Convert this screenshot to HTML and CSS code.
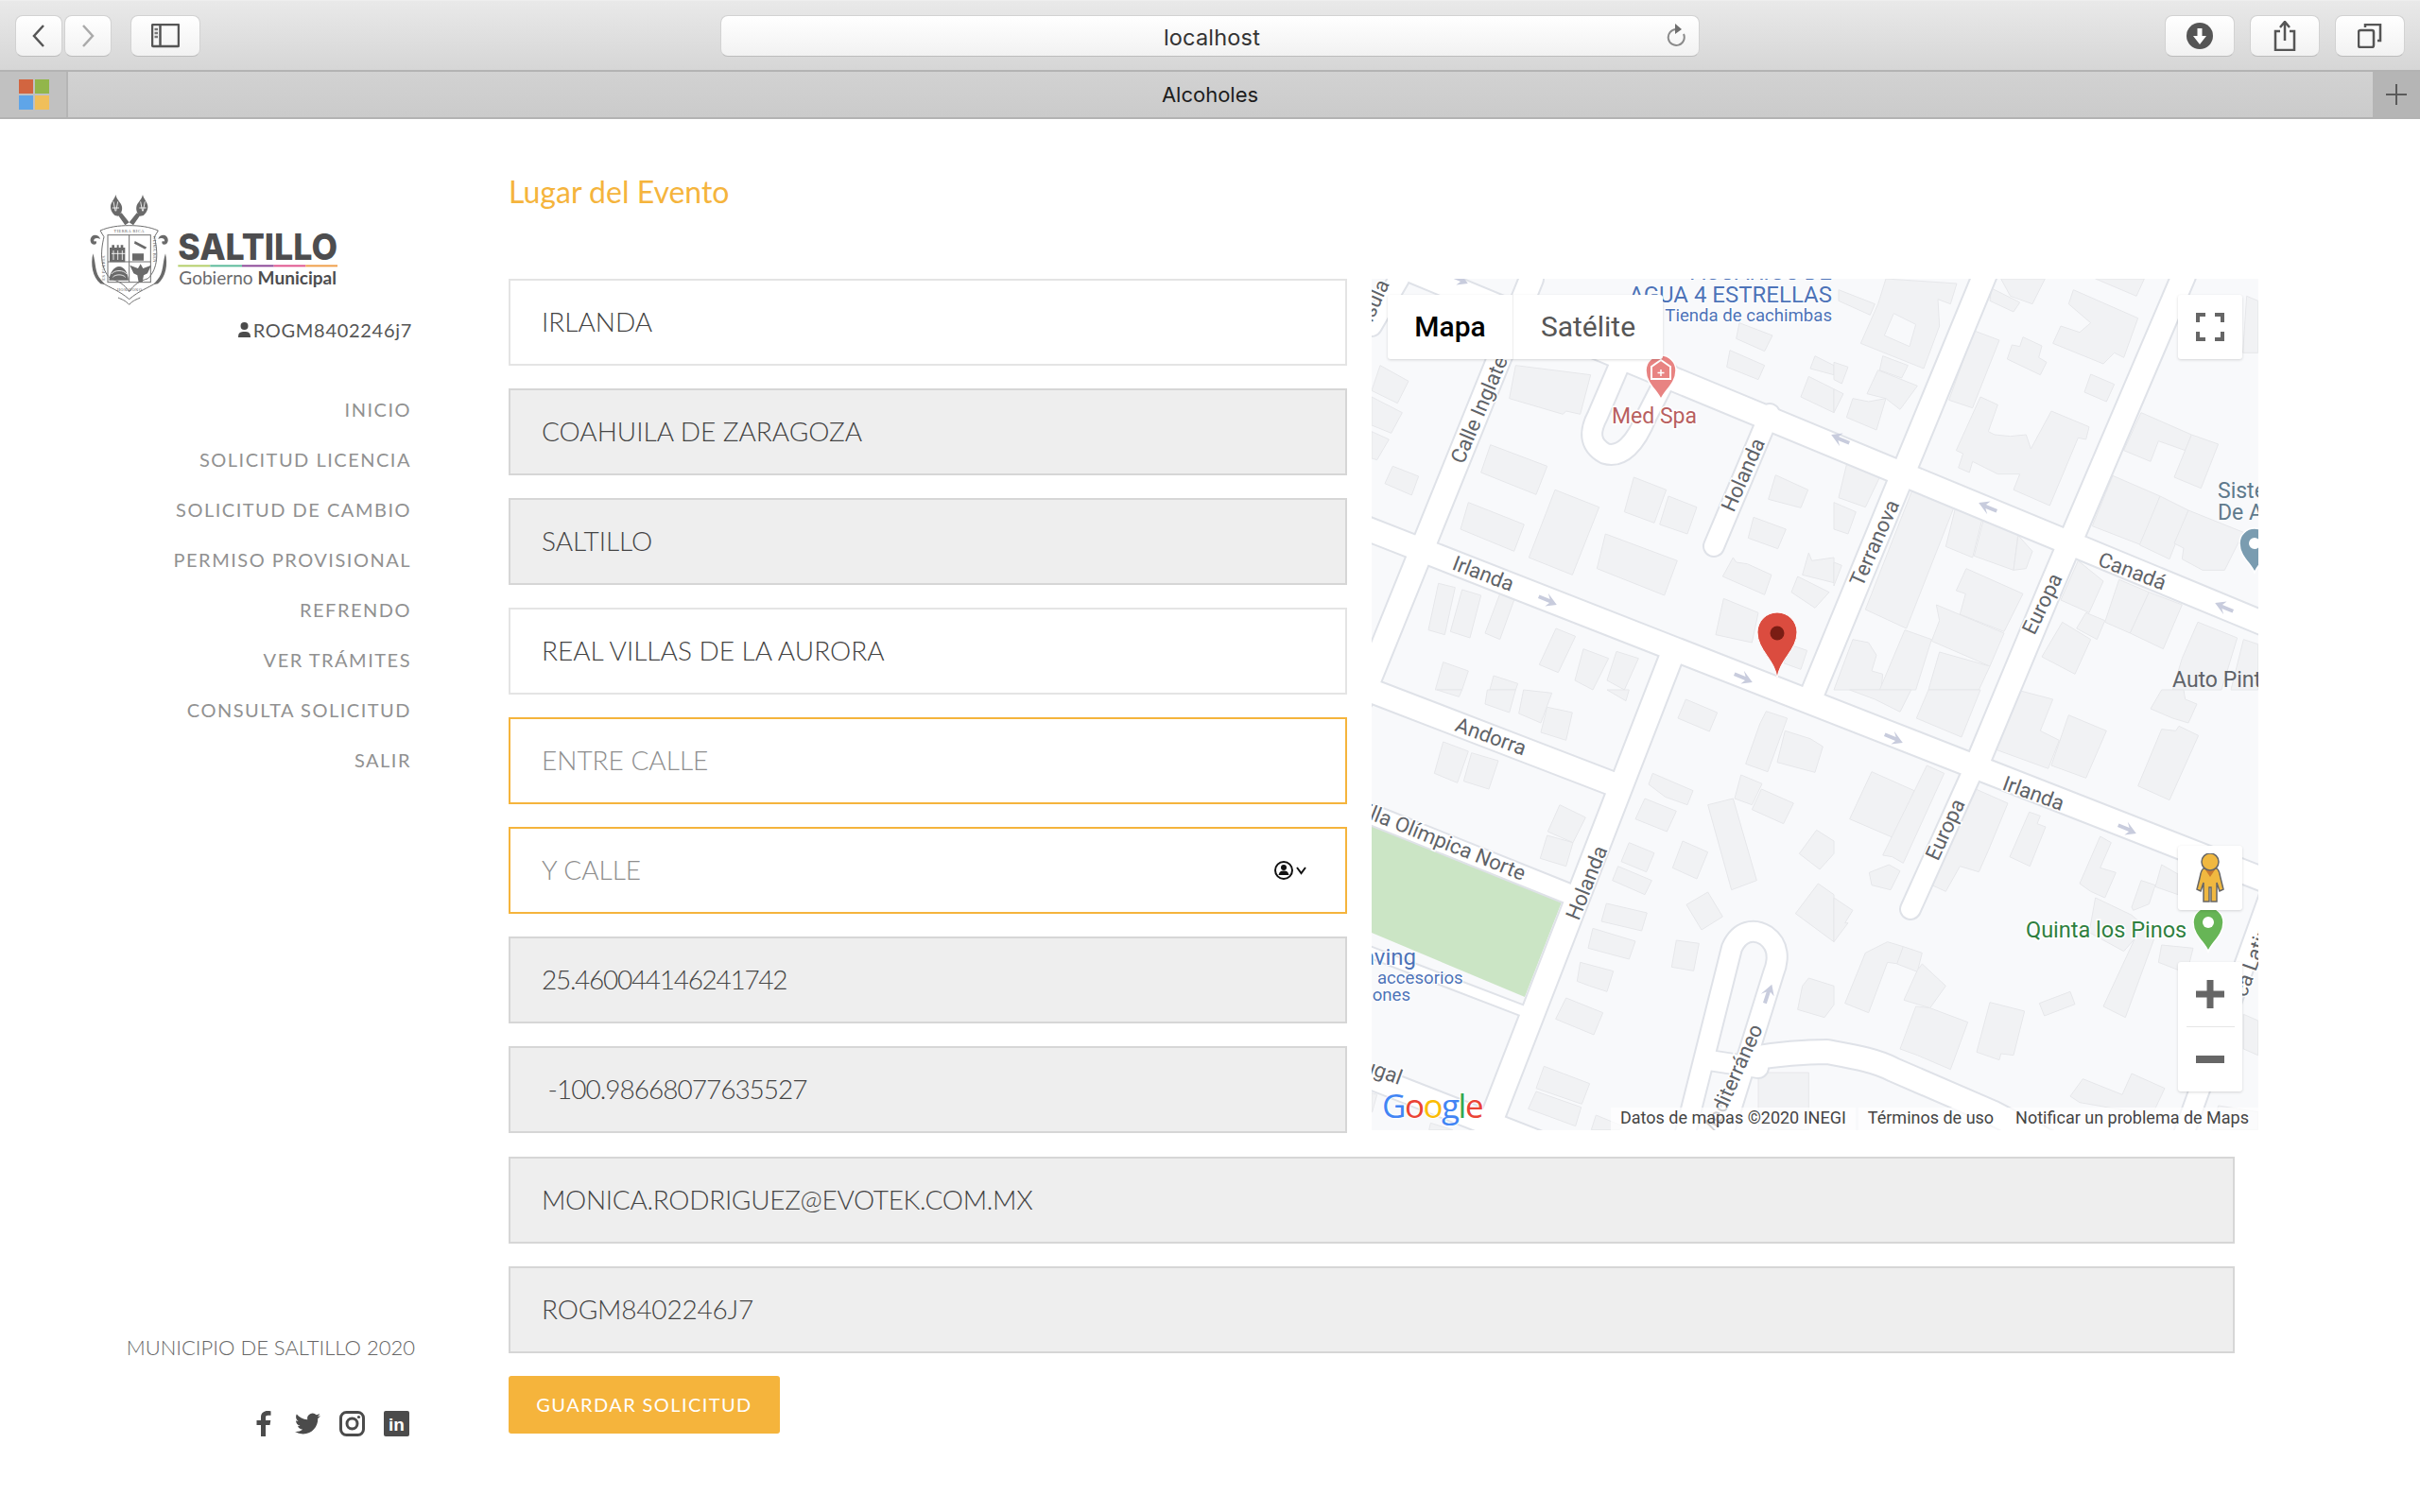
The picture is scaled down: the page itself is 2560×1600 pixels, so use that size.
FILE: index.html
```html
<!DOCTYPE html>
<html lang="es">
<head>
<meta charset="utf-8">
<title>Alcoholes</title>
<link rel="stylesheet" href="styles.css">
</head>
<body>
<header class="toolbar">
  <div class="tb-left">
    <button class="tb-btn nav-btn"><svg width="24" height="30" viewBox="0 0 24 30"><path d="M17 4 7 15l10 11" class="ic-dark"/></svg></button>
    <button class="tb-btn nav-btn"><svg width="24" height="30" viewBox="0 0 24 30"><path d="M7 4l10 11L7 26" class="ic-light"/></svg></button>
    <button class="tb-btn side-btn"><svg width="30" height="26" viewBox="0 0 30 26"><rect x="1" y="1" width="28" height="23" rx="1" class="ic-dark"/><path d="M9.500 1v23" class="ic-dark"/><path d="M3.500 6h3.500M3.500 10h3.500M3.500 14h3.500" class="ic-mid"/></svg></button>
  </div>
  <div class="addr"><span class="addr-text">localhost</span>
    <svg class="reload" width="24" height="26" viewBox="0 0 24 26"><path d="M11 6a8.500 8.500 0 1 0 8 5" class="ic-grey"/><path d="M10 0l7 6-7 5z" class="ic-fill-grey"/></svg>
  </div>
  <div class="tb-right">
    <button class="tb-btn act-btn"><svg width="28" height="28" viewBox="0 0 28 28"><circle cx="14" cy="14" r="14" class="ic-fill-dark"/><path d="M11.500 6h5v8h4.500L14 23 7 14h4.500z" class="ic-fill-white"/></svg></button>
    <button class="tb-btn act-btn"><svg width="24" height="32" viewBox="0 0 24 32"><path d="M7 11H2v20h20V11h-5" class="ic-dark"/><path d="M12 21V2M7 7l5-6 5 6" class="ic-dark"/></svg></button>
    <button class="tb-btn act-btn"><svg width="26" height="26" viewBox="0 0 26 26"><rect x="1" y="7" width="16" height="18" rx="2" class="ic-dark"/><path d="M8 4V1h16v17h-3" class="ic-dark"/></svg></button>
  </div>
</header>
<div class="tabbar">
  <div class="fav-cell"><div class="fav"><i class="f-r"></i><i class="f-g"></i><i class="f-b"></i><i class="f-y"></i></div></div>
  <div class="tab">Alcoholes</div>
  <div class="plus-cell"><svg width="22" height="22" viewBox="0 0 22 22"><path d="M11 0v22M0 11h22" class="ic-plus"/></svg></div>
</div>

<div class="page">
  <aside class="sidebar">
    <svg class="logo" width="300" height="140" viewBox="0 0 900 420">
      <g transform="translate(30 30)">
        <g class="crest-fill">
          <path d="M97 18c-3 14-14 22-16 36-1 14 7 24 14 30l10 2c9-7 14-18 12-30-2-12-16-20-20-38z"/>
          <path d="M183 18c-4 18-18 26-20 38-2 12 3 23 12 30l10-2c7-6 15-16 14-30-2-14-13-22-16-36z"/>
          <path d="M104 82l12-6 24 30-13 9zM176 82l-12-6-24 30 13 9z"/>
          <path d="M22 150c-9 9-6 26 8 26 6-1 8-8 4-11-3 3-7 1-6-3 1-7 12-8 20-3-3-12-18-16-26-9zM258 150c9 9 6 26-8 26-6-1-8-8-4-11 3 3 7 1 6-3-1-7-12-8-20-3 3-12 18-16 26-9z"/>
          <path d="M25 205c10 30 5 62 26 84l12 14-14-2c-26-22-32-62-24-96zM255 205c-10 30-5 62-26 84l-12 14 14-2c26-22 32-62 24-96z"/>
          <path d="M85 178h8v8h8v-8h6v8h6v-8h8v8h6v46H78v-46h7z"/>
          <path d="M150 205h36v22h-36zM158 165l38 20-6 6-34-18z"/>
          <path d="M76 290c2-24 16-44 32-44s28 20 30 44z"/>
          <path d="M176 238l8 14 26-10-12 26-12 6-4 22h-12l-4-22-12-6-12-26 26 10z"/>
        </g>
        <g class="crest-hatch">
          <path d="M90 40l6 30M104 40l-6 30M86 60h22M190 40l-6 30M176 40l6 30M172 60h22"/>
          <path d="M90 195v30M104 195v30M118 195v30M84 205h44"/>
          <path d="M84 270c8-14 40-14 48 0M88 280c8-10 32-10 40 0"/>
        </g>
        <g class="crest-line">
          <path d="M48 132c28-12 58-16 92-16s64 4 92 16l-12 20c12 50 12 100-20 132-26 8-44 18-60 42-16-24-34-34-60-42-32-32-32-82-20-132z"/>
          <rect x="72" y="146" width="136" height="150"/>
          <path d="M140 146v150M72 231h136"/>
          <path d="M52 296c30 20 56 26 88 54 32-28 58-34 88-54"/>
          <path d="M105 345c12 6 22 8 35 22 13-14 23-16 35-22"/>
        </g>
        <text x="140" y="139" text-anchor="middle" class="crest-text">TIERRA  RICA</text>
        <text transform="translate(64 290) rotate(-90)" class="crest-text">ES PUERTA</text>
        <text transform="translate(216 150) rotate(90)" class="crest-text">CLIMA BEN</text>
        <text transform="translate(140 316) rotate(180)" text-anchor="middle" class="crest-text">ONOH'NOH</text>
      </g>
      <text x="325" y="255" textLength="506" lengthAdjust="spacingAndGlyphs" class="logo-main">SALTILLO</text>
      <rect x="325" y="271" width="102" height="6" class="bar-a"/>
      <rect x="427" y="271" width="101" height="6" class="bar-b"/>
      <rect x="528" y="271" width="101" height="6" class="bar-c"/>
      <rect x="629" y="271" width="101" height="6" class="bar-d"/>
      <rect x="730" y="271" width="101" height="6" class="bar-e"/>
      <text x="328" y="333" textLength="500" lengthAdjust="spacingAndGlyphs" class="logo-sub">Gobierno <tspan class="logo-sub-b">Municipal</tspan></text>
    </svg>
    <div class="user"><svg width="13" height="16" viewBox="0 0 13 16"><circle cx="6.500" cy="4" r="4" class="s-dark"/><path d="M0 16c0-5 2-6 6.500-6s6.500 1 6.500 6z" class="s-dark"/></svg><span>ROGM8402246j7</span></div>
    <nav class="nav">
      <a>INICIO</a>
      <a>SOLICITUD LICENCIA</a>
      <a>SOLICITUD DE CAMBIO</a>
      <a>PERMISO PROVISIONAL</a>
      <a>REFRENDO</a>
      <a>VER TRÁMITES</a>
      <a>CONSULTA SOLICITUD</a>
      <a>SALIR</a>
    </nav>
    <footer class="foot">
      <div class="copy">MUNICIPIO DE SALTILLO 2020</div>
      <div class="social">
        <svg class="fb" width="16" height="27" viewBox="0 0 16 27"><path d="M10 27V15h4.500l.8-5H10V7c0-1.500.6-2.300 2.500-2.300H15.500V.3C14.800.2 13.500 0 12 0 8.200 0 5 2.200 5 6.500V10H.5v5H5v12z" class="s-dark"/></svg>
        <svg width="27" height="27" viewBox="0 0 24 24"><path d="M23.953 4.570a10 10 0 01-2.825.775 4.958 4.958 0 002.163-2.723c-.951.555-2.005.959-3.127 1.184a4.920 4.920 0 00-8.384 4.482C7.690 8.095 4.067 6.130 1.640 3.162a4.822 4.822 0 00-.666 2.475c0 1.710.870 3.213 2.188 4.096a4.904 4.904 0 01-2.228-.616v.060a4.923 4.923 0 003.946 4.827 4.996 4.996 0 01-2.212.085 4.936 4.936 0 004.604 3.417 9.867 9.867 0 01-6.102 2.105c-.390 0-.779-.023-1.170-.067a13.995 13.995 0 007.557 2.209c9.053 0 13.998-7.496 13.998-13.985 0-.210 0-.420-.015-.630A9.935 9.935 0 0024 4.590z" class="s-dark"/></svg>
        <svg width="27" height="27" viewBox="0 0 27 27"><rect x="1.500" y="1.500" width="24" height="24" rx="6" class="s-line"/><circle cx="13.500" cy="13.500" r="5.500" class="s-line"/><circle cx="20.500" cy="6.500" r="1.600" class="s-dark"/></svg>
        <svg width="27" height="27" viewBox="0 0 27 27"><rect width="27" height="27" rx="2" class="s-dark"/><text x="13.500" y="21" text-anchor="middle" class="in-text">in</text></svg>
      </div>
    </footer>
  </aside>

  <main class="main">
    <h1 class="title">Lugar del Evento</h1>
    <div class="top-row">
      <div class="col">
        <input class="field" value="IRLANDA" readonly>
        <input class="field off" value="COAHUILA DE ZARAGOZA" readonly>
        <input class="field off" value="SALTILLO" readonly>
        <input class="field" value="REAL VILLAS DE LA AURORA" readonly>
        <input class="field req" placeholder="ENTRE CALLE" readonly>
        <div class="field-wrap">
          <input class="field req" placeholder="Y CALLE" readonly>
          <svg class="autofill" width="34" height="22" viewBox="0 0 34 22"><circle cx="10" cy="11" r="9" class="af-line"/><circle cx="10" cy="8" r="3" class="af-fill"/><path d="M4.500 16c1-4 3-4.500 5.500-4.500s4.500.5 5.500 4.500z" class="af-fill"/><path d="M24 8l4.500 6L33 8" class="af-line"/></svg>
        </div>
        <input class="field off lat" value="25.460044146241742" readonly>
        <input class="field off lng" value=" -100.98668077635527" readonly>
      </div>
      <div class="map">
        <svg class="map-svg" width="938" height="901" viewBox="1451 295 938 901">
          <rect x="1451" y="295" width="938" height="901" class="m-bg"/>
          <g class="blds">
            <g transform="translate(1440 280) scale(.33333)">
              <polygon points="490,320 728,350 695,475 650,465 640,475 470,425"/>
              <polygon points="410,572 590,640 555,730 380,660"/>
              <polygon points="340,755 517,825 485,910 315,840"/>
              <polygon points="615,715 755,770 670,985 532,930"/>
              <polygon points="775,855 1003,940 962,1050 748,965"/>
              <polygon points="865,675 968,715 930,820 835,785"/>
              <polygon points="975,735 1065,770 1035,855 947,825"/>
              <polygon points="1315,668 1418,715 1395,772 1292,745"/>
              <polygon points="1245,802 1348,840 1322,902 1228,868"/>
              <polygon points="1180,930 1190,945 1225,950 1302,985 1280,1048 1147,990"/>
              <polygon points="1150,1060 1260,1105 1240,1200 1125,1175"/>
              <polygon points="1420,915 1430,940 1500,930 1500,1010 1400,985"/>
              <polygon points="1385,990 1485,1040 1440,1090 1365,1040"/>
              <polygon points="75,695 100,640 182,672 160,732"/>
              <polygon points="60,320 150,370 115,440 33,400"/>
              <polygon points="33,420 130,470 95,535 33,510"/>
              <polygon points="33,530 88,555 50,620 33,615"/>
              <polygon points="1200,185 1305,225 1280,275 1190,235"/>
              <polygon points="1170,272 1280,320 1260,365 1160,325"/>
              <polygon points="1440,290 1500,320 1500,350 1425,330"/>
              <polygon points="1420,355 1500,395 1500,470 1395,420"/>
              <polygon points="245,1012 298,1025 265,1175 213,1160"/>
              <polygon points="320,1032 380,1050 345,1185 283,1165"/>
              <polygon points="440,1045 485,1065 440,1190 393,1170"/>
              <polygon points="618,1155 680,1180 625,1295 565,1270"/>
              <polygon points="705,1220 785,1250 735,1350 678,1320"/>
              <polygon points="810,1228 880,1250 835,1350 780,1320"/>
              <polygon points="260,1262 340,1290 320,1350 235,1350"/>
              <polygon points="420,1305 497,1330 490,1350 408,1350"/>
              <polygon points="1370,1210 1415,1225 1395,1285 1340,1265"/>
            </g>
            <g transform="translate(1940 280) scale(.33333)">
              <polygon points="165,45 390,60 370,125 330,110 335,195 285,330 85,250 140,125"/>
              <polygon class="hole" points="190,155 260,190 240,260 160,225"/>
              <polygon points="15,80 130,125 115,160 15,115"/>
              <polygon points="155,290 235,320 215,360 145,335"/>
              <polygon points="140,335 265,385 210,460 165,425 105,410"/>
              <polygon points="60,425 110,435 165,425 135,525 40,485"/>
              <polygon points="0,310 45,325 25,378 0,365"/>
              <polygon points="0,395 30,410 0,470"/>
              <polygon points="530,45 670,45 630,125 560,100"/>
              <polygon points="500,75 590,120 570,150 495,115"/>
              <polygon points="760,80 965,170 920,295 890,280 855,315 695,250 720,195 780,215 815,185 745,125"/>
              <polygon points="830,45 985,45 960,100"/>
              <polygon points="600,230 660,258 650,295 675,310 655,350 550,300 565,255 590,260"/>
              <polygon points="815,348 890,380 865,435 795,405"/>
              <polygon points="445,210 525,240 440,455 365,430"/>
              <polygon points="465,420 520,445 490,530 510,540 560,545 610,540 625,585 690,465 810,515 800,555 775,550 685,765 570,715 590,665 520,665 440,625 430,660 395,645 410,600 388,590"/>
              <polygon points="975,470 1135,540 1115,590 1030,560 1005,625 920,590"/>
              <polygon points="1135,540 1220,570 1165,710 1080,675"/>
              <polygon points="885,670 1035,735 975,890 820,830"/>
              <polygon points="1035,735 1125,780 1065,935 970,890"/>
              <polygon points="1125,780 1300,850 1240,970 1170,970 1105,935 1110,900 1080,885"/>
              <polygon points="1310,100 1346,115 1346,280 1298,280"/>
              <polygon points="45,615 155,655 100,770 15,740"/>
              <polygon points="0,755 70,785 45,855 0,840"/>
              <polygon points="0,945 25,955 0,1020"/>
              <polygon points="255,700 385,760 230,1155 100,1095"/>
              <polygon points="60,1190 110,1200 135,1240 120,1290 155,1300 150,1350 0,1350"/>
              <polygon points="225,1160 310,1190 260,1350 145,1350"/>
              <polygon points="385,775 470,810 440,930 355,895"/>
              <polygon points="475,810 585,850 570,970 445,925"/>
              <polygon points="585,860 630,910 610,965 570,970"/>
              <polygon points="420,965 600,1045 540,1165 400,1110 418,1045 388,1035"/>
              <polygon points="325,1080 540,1170 495,1275 310,1195 335,1130"/>
              <polygon points="335,1230 495,1275 460,1350 300,1350"/>
              <polygon points="775,940 855,1005 810,1105 720,1065"/>
              <polygon points="800,1105 860,1130 835,1190 770,1155"/>
              <polygon points="725,1135 815,1190 765,1300 660,1245"/>
              <polygon points="905,1000 1000,1040 940,1170 860,1135"/>
              <polygon points="1000,1040 1105,1080 1045,1220 940,1170"/>
              <polygon points="1155,1135 1280,1185 1230,1350 1075,1350 1105,1250"/>
              <polygon points="1300,1190 1346,1205 1346,1350 1260,1350"/>
            </g>
            <g transform="translate(1440 730) scale(.33333)">
              <polygon points="260,165 340,195 305,295 232,265"/>
              <polygon points="350,200 435,225 405,315 325,290"/>
              <polygon points="400,0 490,0 470,72 393,45"/>
              <polygon points="515,0 605,10 570,105 500,75"/>
              <polygon points="590,55 670,72 650,160 570,135"/>
              <polygon points="240,0 320,0 310,22"/>
              <polygon points="780,0 850,0 840,35"/>
              <polygon points="630,365 712,405 672,485 592,450"/>
              <polygon points="590,462 672,485 650,560 568,535"/>
              <polygon points="1030,30 1130,72 1105,132 1005,90"/>
              <polygon points="1285,68 1352,90 1290,260 1220,235 1265,108"/>
              <polygon points="1345,130 1425,155 1465,180 1440,262 1320,230"/>
              <polygon points="925,265 1053,320 1035,365 965,340 912,300"/>
              <polygon points="900,345 1000,385 970,450 870,410"/>
              <polygon points="1205,270 1272,298 1240,365 1185,345"/>
              <polygon points="1270,315 1372,360 1340,425 1240,380"/>
              <polygon points="1100,365 1180,345 1255,605 1175,635"/>
              <polygon points="850,485 930,518 905,578 825,545"/>
              <polygon points="1020,480 1100,515 1065,600 988,565"/>
              <polygon points="815,560 922,605 900,650 797,605"/>
              <polygon points="1100,642 1147,720 1080,762 1032,682"/>
              <polygon points="1445,445 1500,480 1500,520 1455,570 1390,520"/>
              <polygon points="1450,615 1500,650 1500,800 1378,710"/>
              <polygon points="778,678 907,708 890,765 762,735"/>
              <polygon points="735,757 870,798 850,855 720,820"/>
              <polygon points="1000,795 1072,805 1055,892 985,880"/>
              <polygon points="695,865 800,893 780,958 725,940 685,925"/>
              <polygon points="650,978 767,1025 738,1095 617,1045"/>
              <polygon points="1420,915 1500,940 1500,1000 1470,1040 1385,1015 1400,940"/>
              <polygon points="580,1195 725,1250 700,1315 555,1265"/>
              <polygon points="555,1275 698,1325 680,1385 530,1330"/>
              <polygon points="745,1350 830,1385 820,1397 730,1397"/>
              <polygon points="1260,1215 1420,1215 1420,1397 1260,1397"/>
              <polygon points="220,1375 290,1397 215,1397"/>
              <polygon points="33,1280 50,1285 35,1340 33,1340"/>
            </g>
            <g transform="translate(1940 730) scale(.33333)">
              <polygon points="50,0 245,0 210,70 130,30"/>
              <polygon points="300,0 465,0 405,150 262,90"/>
              <polygon points="580,0 695,30 655,130 715,160 680,250 515,190"/>
              <polygon points="745,80 865,130 800,280 690,240"/>
              <polygon points="1040,0 1110,0 1115,30 1152,45 1125,105 1075,90 1005,60"/>
              <polygon points="1095,115 1157,145 1065,350 965,305 1040,125 1085,130"/>
              <polygon points="120,260 255,320 190,470 50,410"/>
              <polygon points="295,240 350,265 220,550 185,530 155,525"/>
              <polygon points="450,315 552,360 490,510 460,578 400,560 355,640 300,615 345,540"/>
              <polygon points="175,555 210,575 180,635 120,620 112,580"/>
              <polygon points="620,388 655,400 645,425 672,435 622,560 558,530"/>
              <polygon points="845,465 880,485 845,565 895,580 860,660 815,640 780,615"/>
              <polygon points="975,605 1020,620 1000,680 950,700 945,690"/>
              <polygon points="1040,555 1092,585 1092,650 1020,625"/>
              <polygon points="830,660 945,715 1020,780 925,1040 855,1005 955,790 920,830 810,770"/>
              <polygon points="1040,810 1140,820 1120,900 1030,865"/>
              <polygon points="100,835 170,800 220,815 205,870 170,865 110,1025 35,995"/>
              <polygon points="220,815 280,835 265,895 200,870"/>
              <polygon points="280,870 355,940 305,1010 222,985 265,890"/>
              <polygon points="305,1010 425,1055 370,1205 265,1160 210,1140 260,1005"/>
              <polygon points="495,992 605,1020 570,1160 530,1155 525,1175 453,1150"/>
              <polygon points="750,958 765,998 668,1035 652,995"/>
              <polygon points="945,1218 1050,1265 1010,1350 780,1310 750,1290 790,1235 915,1285"/>
              <polygon points="0,660 60,700 35,740 45,740 0,800"/>
              <polygon points="1300,1030 1346,1050 1346,1160 1300,1140"/>
              <polygon points="1220,1320 1346,1340 1346,1397 1200,1397"/>
            </g>
          </g>
          <polygon points="1451,873 1653,952 1613,1055 1451,987" class="m-park"/>
          <defs>
            <g id="r27">
              <path d="M1490 285L2400 662"/>
              <path d="M1440 557L2400 933"/>
              <path d="M1440 727L1705 829"/>
              <path d="M1440 1136L1650 1218"/>
              <path d="M1620 295L1440 740"/>
              <path d="M1768 695L1558 1236"/>
              <path d="M2100 290L1918 732"/>
              <path d="M2310 292L2170 620 2090 812"/>
              <path d="M1853 1120C1890 1114 1915 1113 1933 1113 1960 1118 1985 1122 2003 1132L2107 1177 2170 1210"/>
            </g>
            <g id="r21">
              <path d="M2085 820L2021 962"/>
              <path d="M1872 438L1813 578"/>
              <path d="M1451 862L1660 946"/>
              <path d="M1775 1230L1832 1003C1840 985 1855 982 1868 990 1882 1000 1882 1015 1876 1030L1823 1200"/>
              <path d="M1808 1122L1860 1130"/>
              <path d="M1765 395L1742 440C1730 470 1715 485 1698 480 1680 470 1682 455 1690 440L1720 370"/>
              <path d="M2400 950L2310 1200"/>
              <path d="M1480 295L1451 345"/>
            </g>
            <g id="r12">
              <path d="M1440 1004L1612 1070"/>
            </g>
          </defs>
          <use href="#r27" class="r-case r27c"/>
          <use href="#r21" class="r-case r21c"/>
          <use href="#r12" class="r-case r12c"/>
          <use href="#r27" class="r-fill r27f"/>
          <use href="#r21" class="r-fill r21f"/>
          <use href="#r12" class="r-fill r12f"/>
          <defs><path id="arr" d="M-10-2H2L-2-7 11 1 0 7 3 2H-10z"/></defs>
          <g class="m-arrow">
            <use href="#arr" transform="translate(1637 635) rotate(22)"/>
            <use href="#arr" transform="translate(1844 717) rotate(22)"/>
            <use href="#arr" transform="translate(1543 295) rotate(22)"/>
            <use href="#arr" transform="translate(1947 465) rotate(202)"/>
            <use href="#arr" transform="translate(2103 537) rotate(202)"/>
            <use href="#arr" transform="translate(2353 643) rotate(202)"/>
            <use href="#arr" transform="translate(2003 781) rotate(22)"/>
            <use href="#arr" transform="translate(2250 877) rotate(22)"/>
            <use href="#arr" transform="translate(1870 1052) rotate(-72)"/>
          </g>
          <g class="m-label">
            <text transform="translate(1548 492) rotate(-67)">Calle Inglaterra</text>
            <text transform="translate(1535 602) rotate(21)">Irlanda</text>
            <text transform="translate(1834 543) rotate(-66)">Holanda</text>
            <text transform="translate(1970 622) rotate(-66)">Terranova</text>
            <text transform="translate(2152 673) rotate(-64)">Europa</text>
            <text transform="translate(2218 598) rotate(21)">Canadá</text>
            <text transform="translate(2117 835) rotate(20)">Irlanda</text>
            <text transform="translate(2050 912) rotate(-65)">Europa</text>
            <text transform="translate(1538 773) rotate(20)">Andorra</text>
            <text transform="translate(1610 932) rotate(22)" text-anchor="end">Villa Olímpica Norte</text>
            <text transform="translate(1670 975) rotate(-68)">Holanda</text>
            <text transform="translate(1865 1088) rotate(-66)" text-anchor="end">Mediterráneo</text>
            <text transform="translate(1480 1148) rotate(20)" text-anchor="end">Portugal</text>
            <text transform="translate(2376 1056) rotate(-70)">ca Latina</text>
            <text transform="translate(1470 300) rotate(-66)" text-anchor="end">Peninsula</text>
          </g>
          <g class="m-poi-blue">
            <text x="1938" y="296" class="p24" text-anchor="end">ACUARIOS DE</text>
            <text x="1938" y="320" class="p24" text-anchor="end">AGUA 4 ESTRELLAS</text>
            <text x="1938" y="340" class="p20" text-anchor="end">Tienda de cachimbas</text>
            <text x="1498" y="1021" class="p24" text-anchor="end">Vaving</text>
            <text x="1457" y="1041" class="p20">accesorios</text>
            <text x="1492" y="1059" class="p20" text-anchor="end">iones</text>
          </g>
          <text x="1705" y="448" class="m-med">Med Spa</text>
          <text x="2346" y="527" class="m-slate">Sistema</text>
          <text x="2346" y="550" class="m-slate">De Agua</text>
          <text x="2298" y="727" class="m-grey">Auto Pintura</text>
          <text x="2143" y="992" class="m-green">Quinta los Pinos</text>
          <path d="M1757 423c-3-9-16-17-16-31a16 16 0 1 1 32 0c0 14-13 22-16 31z" class="pin-med"/>
          <path d="M1757 381l10 7v13h-20v-13z" class="pin-ic"/>
          <path d="M1757 391v7M1753.500 394.500h7" class="pin-ic2"/>
          <path d="M2385 606c-3-9-16-17-16-31a16 16 0 1 1 32 0c0 14-13 22-16 31z" class="pin-blue"/>
          <circle cx="2385" cy="575" r="6" class="pin-dot"/>
          <path d="M2336 1007c-3-9-16-17-16-31a16 16 0 1 1 32 0c0 14-13 22-16 31z" class="pin-green"/>
          <circle cx="2336" cy="976" r="6" class="pin-dot"/>
          <path d="M1880 718c-2-20-21-30-21-49a21 21 0 1 1 42 0c0 19-19 29-21 49z" class="pin-red"/>
          <circle cx="1880" cy="670" r="7.500" class="pin-red-dot"/>
          <text x="1462" y="1183" class="g-logo"><tspan class="g-b">G</tspan><tspan class="g-r">o</tspan><tspan class="g-y">o</tspan><tspan class="g-b">g</tspan><tspan class="g-g">l</tspan><tspan class="g-r">e</tspan></text>
        </svg>
        <div class="map-type"><span class="mt-on">Mapa</span><span class="mt-off">Satélite</span></div>
        <div class="map-btn fs"><svg width="30" height="30" viewBox="0 0 30 30"><path d="M2 10V2h8M20 2h8v8M28 20v8h-8M10 28H2v-8" class="mc-line"/></svg></div>
        <div class="map-btn peg"><svg width="30" height="52" viewBox="0 0 30 52"><path d="M8 16h14c3 2 3 6 4 10l3 12-4 2-3-9v20h-6V36h-2v15H8V31l-3 9-4-2 3-12c1-4 1-8 4-10z" class="peg-body"/><path d="M9 16h12l-6 9z" class="peg-scarf"/><circle cx="15" cy="9" r="9" class="peg-body"/></svg></div>
        <div class="map-zoom">
          <div class="mz"><svg width="30" height="30" viewBox="0 0 30 30"><path d="M11.500 0h7v11.500H30v7H18.500V30h-7V18.500H0v-7h11.500z" class="mc-fill"/></svg></div>
          <div class="mz-line"></div>
          <div class="mz"><svg width="30" height="8" viewBox="0 0 30 8"><rect width="30" height="8" class="mc-fill"/></svg></div>
        </div>
        <div class="attrib"><span>Datos de mapas ©2020 INEGI</span><span>Términos de uso</span><span>Notificar un problema de Maps</span></div>
      </div>
    </div>
    <input class="field off wide mail" value="MONICA.RODRIGUEZ@EVOTEK.COM.MX" readonly>
    <input class="field off wide rfc" value="ROGM8402246J7" readonly>
    <button class="save">GUARDAR SOLICITUD</button>
  </main>
</div>
</body>
</html>
```
FILE: styles.css
```css
* { box-sizing: border-box; }
html, body { margin: 0; padding: 0; background: #fff; }
body { width: 2560px; height: 1600px; overflow: hidden; font-family: "Lato", "Liberation Sans", sans-serif; color: #555; }

/* browser chrome */
.toolbar { height: 76px; display: grid; grid-template-columns: 746px 1036px 1fr; padding: 16px 16px 0; background: linear-gradient(#e9e9e9, #d6d6d6); border-top: 1px solid #eee; border-bottom: 2px solid #b3b3b3; }
.tb-left, .tb-right { display: flex; }
.tb-right { justify-content: flex-end; gap: 16px; }
.tb-btn, .addr { height: 44px; background: linear-gradient(#fff, #f2f2f2); border: 1px solid #d2d2d2; border-bottom-color: #bdbdbd; border-radius: 8px; display: flex; align-items: center; justify-content: center; padding: 0; margin-top: -1px; }
.nav-btn { width: 50px; margin-right: 2px; }
.side-btn { width: 74px; margin-left: 18px; }
.act-btn { width: 74px; }
.addr { position: relative; padding-top: 2px; }
.addr-text { font: 23.500px "Inter", "Liberation Sans", sans-serif; color: #333; letter-spacing: .2px; margin-left: 4px; }
.reload { position: absolute; right: 11px; top: 8px; }
.ic-dark { fill: none; stroke: #555; stroke-width: 2.500; }
.ic-light { fill: none; stroke: #aaa; stroke-width: 2.500; }
.ic-mid { fill: none; stroke: #777; stroke-width: 2.500; }
.ic-grey { fill: none; stroke: #8a8a8a; stroke-width: 2; }
.ic-fill-grey { fill: #6e6e6e; }
.ic-fill-dark { fill: #555; }
.ic-fill-white { fill: #fff; }
.ic-plus { fill: none; stroke: #5a5a5a; stroke-width: 2; }
.tabbar { height: 50px; display: flex; background: linear-gradient(#d2d2d2, #cbcbcb); border-bottom: 2px solid #b3b3b3; }
.fav-cell { width: 72px; background: #c1c1c1; border-right: 2px solid #b5b5b5; display: flex; align-items: flex-start; justify-content: center; padding-top: 8px; padding-left: 2px; }
.fav { width: 32px; height: 32px; display: grid; grid-template-columns: 15px 15px; grid-template-rows: 15px 15px; gap: 2px; }
.f-r { background: #d26540; } .f-g { background: #92b64a; } .f-b { background: #5fa5e8; } .f-y { background: #f0bf5a; }
.tab { flex: 1; text-align: center; padding-right: 22px; font: 22px/48px "Inter", "Liberation Sans", sans-serif; color: #1d1d1d; }
.plus-cell { width: 50px; background: #b5b5b5; display: flex; align-items: center; justify-content: center; }

/* page */
.page { display: flex; height: 1474px; }
.sidebar { width: 538px; flex: none; display: flex; flex-direction: column; padding: 64px 103px 80px 0; align-items: flex-end; }
.logo { display: block; margin-right: 55px; flex: none; }
.crest-fill { fill: #6a6a6a; }
.crest-line { fill: none; stroke: #6f6f6f; stroke-width: 3; }
.crest-hatch { fill: none; stroke: #fff; stroke-width: 2.500; }
.crest-text { font: 13px "Liberation Serif", serif; letter-spacing: 1.500px; fill: #555; }
.logo-main { font: 800 116px "Inter", "Lato", sans-serif; fill: #4d4d4f; }
.logo-sub { font: 400 56px "Lato", sans-serif; fill: #6a6a6c; }
.logo-sub-b { font-weight: 700; fill: #4d4d4f; }
.bar-a { fill: #b5cf6b; } .bar-b { fill: #5dbb9c; } .bar-c { fill: #8d4a98; } .bar-d { fill: #e0578f; } .bar-e { fill: #f0a04c; }
.user { display: flex; align-items: center; gap: 3px; height: 24px; margin-top: 7px; font-size: 20px; letter-spacing: .7px; color: #555; margin-right: -1px; }
.nav { display: flex; flex-direction: column; align-items: flex-end; margin-top: 46px; }
.nav a { height: 53px; line-height: 53px; font-size: 20px; letter-spacing: 1.500px; color: #919191; }
.foot { margin-top: auto; display: flex; flex-direction: column; align-items: flex-end; }
.copy { font-size: 22px; line-height: 30px; color: #666; font-weight: 300; margin-right: -4px; }
.social { display: flex; gap: 20px; margin-top: 52px; margin-right: 2px; }
.fb { margin-right: 5px; }
.s-dark { fill: #4b4b4b; }
.s-line { fill: none; stroke: #4b4b4b; stroke-width: 3; }
.in-text { font: 700 19px "Liberation Sans", sans-serif; fill: #fff; }

.main { flex: 1; padding-top: 57px; }
.title { margin: 0 0 72px; font-size: 32px; line-height: 40px; font-weight: 400; color: #f5b43c; }
.top-row { display: flex; align-items: flex-start; gap: 26px; margin-bottom: 25px; }
.col { width: 887px; display: flex; flex-direction: column; gap: 24px; }
.field { display: block; width: 100%; height: 92px; padding: 0 33px 3px; border: 2px solid #e4e4e4; background: #fff; font: 300 28px "Lato", sans-serif; color: #444; outline: none; border-radius: 0; }
.field::placeholder { color: #8e8e8e; opacity: 1; }
.off { background: #eee; border-color: #d6d6d6; }
.req { border-color: #f5b43c; }
.lat { letter-spacing: -1.300px; }
.lng { letter-spacing: -1px; }
.rfc { letter-spacing: -.2px; }
.mail { letter-spacing: -.3px; }
.wide { width: 1826px; margin-bottom: 24px; }
.field-wrap { position: relative; }
.autofill { position: absolute; right: 43px; top: 35px; }
.af-line { fill: none; stroke: #111; stroke-width: 2; }
.af-fill { fill: #111; }
.save { display: block; width: 287px; height: 61px; margin-top: 1px; background: #f5b43c; border: 0; border-radius: 3px; color: #fff; font: 400 20px "Lato", sans-serif; letter-spacing: 1.400px; padding: 0 0 2px; }

/* map */
.map { position: relative; width: 938px; height: 901px; flex: none; overflow: hidden; }
.map-svg { display: block; }
.m-bg { fill: #f8f9fb; }
.blds polygon { fill: #f1f2f4; stroke: #e6e7ea; stroke-width: 3; }
.blds polygon.hole { fill: #f8f9fb; }
.m-park { fill: #cbe5c5; }
.r-case, .r-fill { fill: none; stroke-linecap: round; stroke-linejoin: round; }
.r-case { stroke: #dfe2e8; }
.r-fill { stroke: #fff; }
.r27c { stroke-width: 28px; } .r27f { stroke-width: 24px; }
.r21c { stroke-width: 24px; } .r21f { stroke-width: 20px; }
.r12c { stroke-width: 14px; } .r12f { stroke-width: 10px; }
.m-arrow { fill: #c8ccdd; }
.m-label text { font: 22px "Roboto", sans-serif; fill: #5f6368; stroke: #fff; stroke-width: 3px; paint-order: stroke; }
.m-poi-blue text { font-family: "Roboto", sans-serif; fill: #4d73b8; stroke: #fff; stroke-width: 2px; paint-order: stroke; }
.m-poi-blue .p24 { font-size: 24px; }
.m-poi-blue .p20 { font-size: 18.600px; }
.m-med { font: 23px "Roboto", sans-serif; fill: #b8605f; stroke: #fff; stroke-width: 3px; paint-order: stroke; }
.m-slate { font: 23px "Roboto", sans-serif; fill: #5f7a8c; }
.m-grey { font: 23px "Roboto", sans-serif; fill: #5f6368; }
.m-green { font: 23.500px "Roboto", sans-serif; fill: #2f8040; stroke: #fff; stroke-width: 3px; paint-order: stroke; }
.pin-med { fill: #e88382; stroke: #fff; stroke-width: 1.500px; }
.pin-ic { fill: none; stroke: #fff; stroke-width: 2px; }
.pin-ic2 { fill: none; stroke: #fff; stroke-width: 1.500px; }
.pin-blue { fill: #7a9cb0; stroke: #fff; stroke-width: 1.500px; }
.pin-green { fill: #67b556; stroke: #fff; stroke-width: 1.500px; }
.pin-dot { fill: #fff; }
.pin-red { fill: #db4c3f; stroke: #fff; stroke-width: 1px; }
.pin-red-dot { fill: #7a1d14; }
.g-logo { font: 500 35px "Open Sans", "Roboto", sans-serif; letter-spacing: -1.500px; stroke: #fff; stroke-width: 2px; paint-order: stroke; }
.g-b { fill: #4285f4; } .g-r { fill: #ea4335; } .g-y { fill: #fbbc05; } .g-g { fill: #34a853; }

.map-type { position: absolute; left: 17px; top: 17px; width: 291px; height: 68px; display: flex; background: #fff; border-radius: 3px; box-shadow: 0 1px 3px rgba(0,0,0,.15); font: 30px/68px "Roboto", sans-serif; }
.mt-on { width: 133px; text-align: center; font-weight: 500; color: #000; border-right: 1px solid #eee; }
.mt-off { flex: 1; text-align: center; color: #565656; }
.map-btn { position: absolute; left: 853px; width: 68px; height: 68px; background: #fff; border-radius: 3px; box-shadow: 0 1px 3px rgba(0,0,0,.15); display: flex; align-items: center; justify-content: center; }
.fs { top: 17px; }
.peg { top: 600px; }
.mc-line { fill: none; stroke: #666; stroke-width: 4px; }
.mc-fill { fill: #666; }
.peg-body { fill: #f0b840; stroke: #666; stroke-width: 1.500px; }
.peg-scarf { fill: #c97a30; }
.map-zoom { position: absolute; left: 853px; top: 723px; width: 68px; height: 137px; background: #fff; border-radius: 3px; box-shadow: 0 1px 3px rgba(0,0,0,.15); display: flex; flex-direction: column; align-items: center; }
.mz { height: 68px; width: 68px; display: flex; align-items: center; justify-content: center; }
.mz-line { width: 51px; height: 1px; background: #e6e6e6; }
.attrib { position: absolute; right: 0; bottom: 0; height: 24px; display: flex; font: 18px/21px "Roboto", sans-serif; color: #444; gap: 3px; }
.attrib span { background: rgba(255,255,255,.7); padding: 0 10px; }
```
